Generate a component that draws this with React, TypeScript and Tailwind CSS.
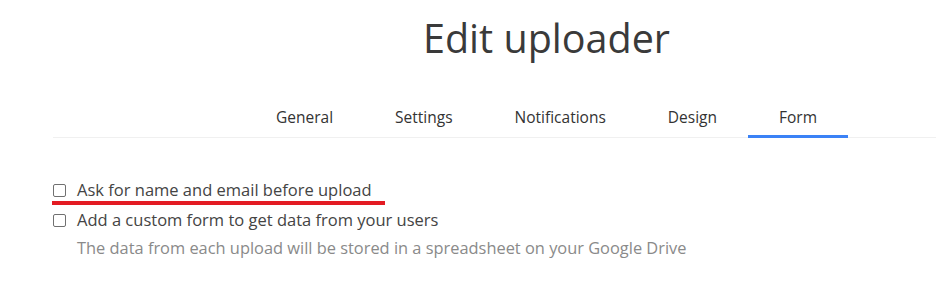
const tabs = ["General", "Settings", "Notifications", "Design", "Form"];

export default function App() {
  return (
    <div className="relative h-[298px] w-[936px] overflow-hidden bg-white font-['Open_Sans',sans-serif] text-[#444]">
      <div className="ml-[53px] w-[987px]">
        {/* Title */}
        <h1 className="pt-[12px] text-center text-[39.5px] leading-[52px] text-[#3a3a3a]">Edit uploader</h1>

        {/* Tabs */}
        <div className="mt-[40px] flex justify-center border-b border-[#f0f0f0]">
          {tabs.map((tab) => (
            <div
              key={tab}
              className={`-mb-px px-[31px] pb-[5px] text-[15.5px] leading-[26px] text-[#333] ${
                tab === "Form" ? "border-b-[3px] border-[#3b82f6]" : "border-b-[3px] border-transparent"
              }`}
            >
              {tab}
            </div>
          ))}
        </div>

        {/* Options */}
        <div className="mt-[37px] flex flex-col">
          <label className="flex items-center gap-[11px] text-[16.5px] leading-[30px] text-[#444]">
            <span className="h-[13px] w-[13px] rounded-[2px] border border-[#707070]" />
            Ask for name and email before upload
          </label>
          <label className="flex items-center gap-[11px] text-[16.5px] leading-[30px] text-[#444]">
            <span className="h-[13px] w-[13px] rounded-[2px] border border-[#707070]" />
            Add a custom form to get data from your users
          </label>
          <p className="pl-[24px] text-[16.4px] leading-[25px] text-[#8a8a8a]">
            The data from each upload will be stored in a spreadsheet on your Google Drive
          </p>
        </div>
      </div>

      {/* Red annotation underline */}
      <div className="absolute left-[52px] top-[201px] h-[4px] w-[333px] bg-[#e31b23]" />
    </div>
  );
}
